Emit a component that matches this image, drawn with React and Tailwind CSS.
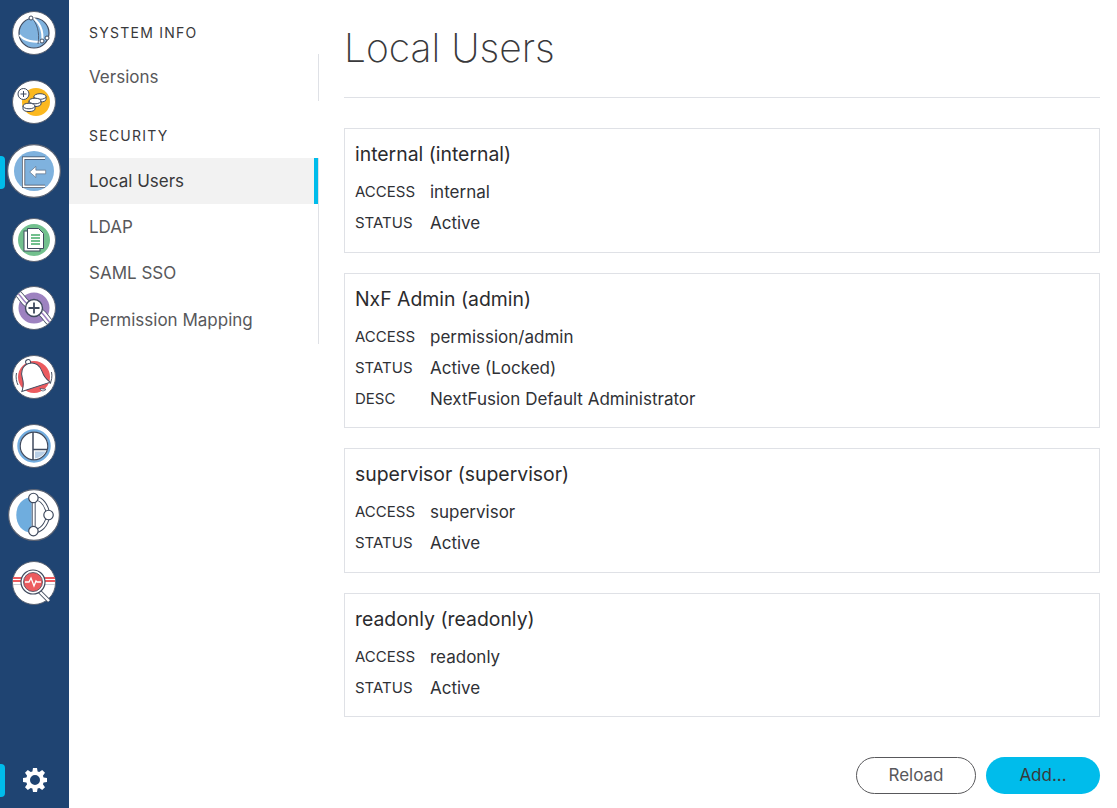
import React from 'react';

const Badge = ({ size = 44, children }) => (
  <svg width={size} height={size} viewBox="0 0 44 44" fill="none">
    <circle cx="22" cy="22" r="21.500" fill="#fff" stroke="#5b6373" strokeWidth="1" />
    {children}
  </svg>
);

const line = { stroke: '#3f4a5e', strokeWidth: 1.2, fill: 'none' };
const white = { stroke: '#3f4a5e', strokeWidth: 1, fill: '#fff' };

const GlobeIcon = () => (
  <Badge>
    <circle cx="22" cy="22" r="15" fill="#7fb2de" stroke="#3f4a5e" strokeWidth="1.200" />
    <path d="M7.500 24c5 6 15 8 24 6" stroke="#fff" strokeWidth="2" />
    <path d="M19 6c8 4 13 13 11 25" stroke="#fff" strokeWidth="2" />
    <path d="M19 6c6 6 9 15 7 27" stroke="#3f4a5e" strokeWidth="0.8" />
    <circle cx="19" cy="7" r="2" {...white} />
    <circle cx="30" cy="30" r="2" {...white} />
    <circle cx="35" cy="27" r="2" {...white} />
  </Badge>
);

const Coin = ({ x, y }) => (
  <g>
    <path d={`M${x - 6} ${y}v3c0 3.400 12 3.400 12 0v-3z`} {...white} />
    <ellipse cx={x} cy={y} rx="6" ry="2.800" {...white} />
  </g>
);

const CoinsIcon = () => (
  <Badge>
    <circle cx="24" cy="22" r="14" fill="#fbb81f" />
    <Coin x={28} y={16.500} />
    <Coin x={23} y={21} />
    <Coin x={17} y={26} />
    <circle cx="11.500" cy="14" r="5.500" {...white} />
    <path d="M8.500 14h6M11.500 11v6" stroke="#3f4a5e" strokeWidth="1" />
  </Badge>
);

const LoginIcon = () => (
  <Badge size={54}>
    <circle cx="22" cy="22" r="16.300" fill="#7fb2de" />
    <path d="M31 11.500H13.500v23H31" stroke="#3f4a5e" strokeWidth="2.600" />
    <path d="M31 11.500H13.500v23H31" stroke="#fff" strokeWidth="1.400" />
    <path d="M18.500 22.800l5-4.500v3H31.500v3H23.500v3z" fill="#fff" stroke="#5a6678" strokeWidth="0.5" />
  </Badge>
);

const DocsIcon = () => (
  <Badge>
    <circle cx="22" cy="22" r="16" fill="#72c08e" />
    <rect x="12" y="13" width="16" height="20" {...white} />
    <path d="M15.500 10.500h11l5 5v15h-16z" {...white} />
    <path d="M19 17h9M19 20h9M19 23h9M19 26h9" stroke="#72c08e" strokeWidth="2" />
  </Badge>
);

const ExchangeIcon = () => (
  <Badge>
    <circle cx="22" cy="22" r="15.500" fill="#9d82c0" />
    <path d="M6.500 8c5 5 6 10 13 12" stroke="#3f4a5e" strokeWidth="7.400" />
    <path d="M6.500 8c5 5 6 10 13 12" stroke="#fff" strokeWidth="6" />
    <path d="M6.500 8c5 5 6 10 13 12" stroke="#9d82c0" strokeWidth="1.500" />
    <path d="M37.500 36c-5-5-6-10-13-12" stroke="#3f4a5e" strokeWidth="7.400" />
    <path d="M37.500 36c-5-5-6-10-13-12" stroke="#fff" strokeWidth="6" />
    <path d="M37.500 36c-5-5-6-10-13-12" stroke="#9d82c0" strokeWidth="1.500" />
    <circle cx="22" cy="22" r="8.500" fill="#fff" stroke="#3f4a5e" strokeWidth="1.400" />
    <path d="M16.500 22h11M22 16.500v11" stroke="#3f4a5e" strokeWidth="1.800" />
  </Badge>
);

const BellIcon = () => (
  <Badge>
    <circle cx="22" cy="22" r="16" fill="#ec5b5f" />
    <g transform="rotate(-18 22 22)">
      <circle cx="21" cy="6" r="2.500" {...white} />
      <path d="M21 7.500c-7 0-10.500 6-10.500 12.500 0 6.500-2.500 9-4.500 12h30c-2-3-4.500-5.500-4.500-12 0-6.500-3.500-12.500-10.500-12.500z" fill="#fff" stroke="#3f4a5e" strokeWidth="1" />
    </g>
    <path d="M28 33.500c1 3 4 3 6 .8z" fill="#fff" stroke="#3f4a5e" strokeWidth="0.8" />
    <path d="M4.500 18c-1 4 0 9 1.500 12M39.500 17c1 4 0 9-1.500 12" stroke="#4d5566" strokeWidth="1" />
  </Badge>
);

const PieIcon = () => (
  <Badge>
    <circle cx="22" cy="22" r="15.500" fill="#fff" stroke="#72ade0" strokeWidth="2.500" />
    <circle cx="22" cy="22" r="13.800" {...line} />
    <path d="M21 8v28" stroke="#3f4a5e" strokeWidth="1.500" />
    <path d="M21 25.500h14" stroke="#3f4a5e" strokeWidth="1.500" />
    <path d="M23 27.500h10.500c-2 3.500-5.500 6-10.500 7z" fill="#b9cfe6" />
  </Badge>
);

const ArcIcon = () => (
  <Badge size={52}>
    <path d="M20 7C12 7 7 14 7 22s5 15 13 15z" fill="#6fadde" />
    <path d="M20.500 8v28M23 8v28" stroke="#3f4a5e" strokeWidth="0.8" />
    <path d="M21.500 7.600c7 0 11 6 12.800 14.400-1.800 8-5.800 13.600-12.800 13.600" stroke="#3f4a5e" strokeWidth="3.600" />
    <path d="M21.500 7.600c7 0 11 6 12.800 14.400-1.800 8-5.800 13.600-12.800 13.600" stroke="#fff" strokeWidth="2" />
    <circle cx="21.500" cy="7.600" r="4" {...white} />
    <circle cx="34.300" cy="22" r="4" {...white} />
    <circle cx="21.500" cy="35.600" r="4" {...white} />
  </Badge>
);

const SearchIcon = () => (
  <Badge>
    <rect x="1" y="16" width="42" height="5" fill="#ec5b5f" />
    <path d="M1 18.500h42" stroke="#fff" strokeWidth="1" />
    <path d="M1 23.500h42" stroke="#c9ced6" strokeWidth="1" />
    <path d="M27 30l10 10" stroke="#4d5566" strokeWidth="4" />
    <path d="M27 30l10 10" stroke="#fff" strokeWidth="2.400" />
    <circle cx="21" cy="21" r="12" fill="#fff" stroke="#3f4a5e" strokeWidth="1.200" />
    <circle cx="21" cy="21" r="9.500" fill="#ec5b5f" stroke="#3f4a5e" strokeWidth="0.8" />
    <path d="M13 21h4l2-4 3 8 2-5 1 1h4" stroke="#fff" strokeWidth="1.300" />
  </Badge>
);

const GearIcon = () => (
  <svg width="26" height="26" viewBox="0 0 26 26">
    <path
      fillRule="evenodd"
      fill="#fff"
      d="M11 1h4l.6 3.400 1.700.7L20.200 3l2.800 2.800-2.100 2.900.7 1.700 3.400.6v4l-3.400.6-.7 1.700 2.100 2.900-2.800 2.800-2.900-2.100-1.700.7-.6 3.300h-4l-.6-3.300-1.700-.7L5.800 23 3 20.200l2.100-2.900-.7-1.700L1 15v-4l3.400-.6.700-1.700L3 5.800 5.800 3l2.900 2.100 1.700-.7zM13 8a5 5 0 1 0 0 10 5 5 0 0 0 0-10z"
    />
  </svg>
);

const railIcons = [
  { icon: <GlobeIcon /> },
  { icon: <CoinsIcon /> },
  { icon: <LoginIcon />, active: true },
  { icon: <DocsIcon /> },
  { icon: <ExchangeIcon /> },
  { icon: <BellIcon /> },
  { icon: <PieIcon /> },
  { icon: <ArcIcon /> },
  { icon: <SearchIcon /> },
];

const users = [
  { name: 'internal (internal)', height: 'h-[125px]', rows: [['ACCESS', 'internal'], ['STATUS', 'Active']] },
  {
    name: 'NxF Admin (admin)',
    height: 'h-[155px]',
    rows: [['ACCESS', 'permission/admin'], ['STATUS', 'Active (Locked)'], ['DESC', 'NextFusion Default Administrator']],
  },
  { name: 'supervisor (supervisor)', height: 'h-[125px]', rows: [['ACCESS', 'supervisor'], ['STATUS', 'Active']] },
  { name: 'readonly (readonly)', height: 'h-[124px]', rows: [['ACCESS', 'readonly'], ['STATUS', 'Active']] },
];

const NavItem = ({ label, active }) => (
  <div
    className={`h-[46.300px] pl-5 pt-[1px] flex items-center text-[17px] border-r-[4px] ${
      active ? 'bg-[#f2f2f2] text-[#39393b] border-[#00bceb]' : 'text-[#58585b] border-transparent'
    }`}
  >
    {label}
  </div>
);

const UserCard = ({ user }) => (
  <div className={`${user.height} border border-[#dfe1e6] px-[10px] pt-[13px]`}>
    <div className="text-[19.400px] leading-6 text-[#2b2b2e]">{user.name}</div>
    <div className="mt-[15px] flex flex-col gap-[7px]">
      {user.rows.map(([key, value]) => (
        <div key={key} className="flex items-center h-6">
          <span className="w-[75px] text-[15px] -mt-[2px] text-[#2f3136]">{key}</span>
          <span className="text-[17px] text-[#2f3136]">{value}</span>
        </div>
      ))}
    </div>
  </div>
);

export default function App() {
  return (
    <div className="flex h-[808px] w-[1117px] overflow-hidden bg-white font-['Inter',sans-serif]">
      {/* Icon rail */}
      <div className="w-[69px] shrink-0 bg-[#1f4472] flex flex-col">
        <div className="-mt-[1px] flex flex-col flex-1">
          {railIcons.map((item, i) => (
            <div key={i} className="relative h-[68.750px] pr-[1px] flex items-center justify-center">
              {item.active && <span className="absolute left-0 top-[19px] h-[33px] w-[5px] rounded-r-sm bg-[#00bceb]" />}
              {item.icon}
            </div>
          ))}
        </div>
        <div className="relative h-[44px] flex items-start justify-center pt-[3px]">
          <span className="absolute left-0 top-0 h-[33px] w-[5px] rounded-r-sm bg-[#00bceb]" />
          <GearIcon />
        </div>
      </div>

      {/* Secondary nav */}
      <div className="w-[250px] shrink-0 pt-[23px]">
        <div className="h-[18px] pl-5 flex items-center text-[14px] tracking-[1.250px] text-[#39393b]">SYSTEM INFO</div>
        <div className="mt-[13px] h-[47px] border-r border-[#dfe1e6]">
          <NavItem label="Versions" />
        </div>
        <div className="mt-[25px] h-[18px] pl-5 flex items-center text-[14px] tracking-[1.250px] text-[#39393b]">SECURITY</div>
        <div className="mt-[14px] border-r border-[#dfe1e6] h-[186px]">
          <NavItem label="Local Users" active />
          <NavItem label="LDAP" />
          <NavItem label="SAML SSO" />
          <NavItem label="Permission Mapping" />
        </div>
      </div>

      {/* Main content */}
      <div className="w-[756px] ml-[25px] flex flex-col">
        <div className="h-[98px] border-b border-[#dfe1e6] pt-[23px]">
          <h1 className="text-[39px] leading-[50px] font-extralight text-[#39393b]">Local Users</h1>
        </div>
        <div className="mt-[30px] flex flex-col gap-[20px]">
          {users.map((user) => (
            <UserCard key={user.name} user={user} />
          ))}
        </div>
        <div className="mt-[40px] flex justify-end gap-[10px]">
          <button className="w-[120px] h-[37px] rounded-full border border-[#58585b] text-[17px] text-[#58585b]">Reload</button>
          <button className="w-[114px] h-[37px] rounded-full bg-[#00bceb] text-[17px] text-[#39393b]">Add...</button>
        </div>
      </div>
    </div>
  );
}
